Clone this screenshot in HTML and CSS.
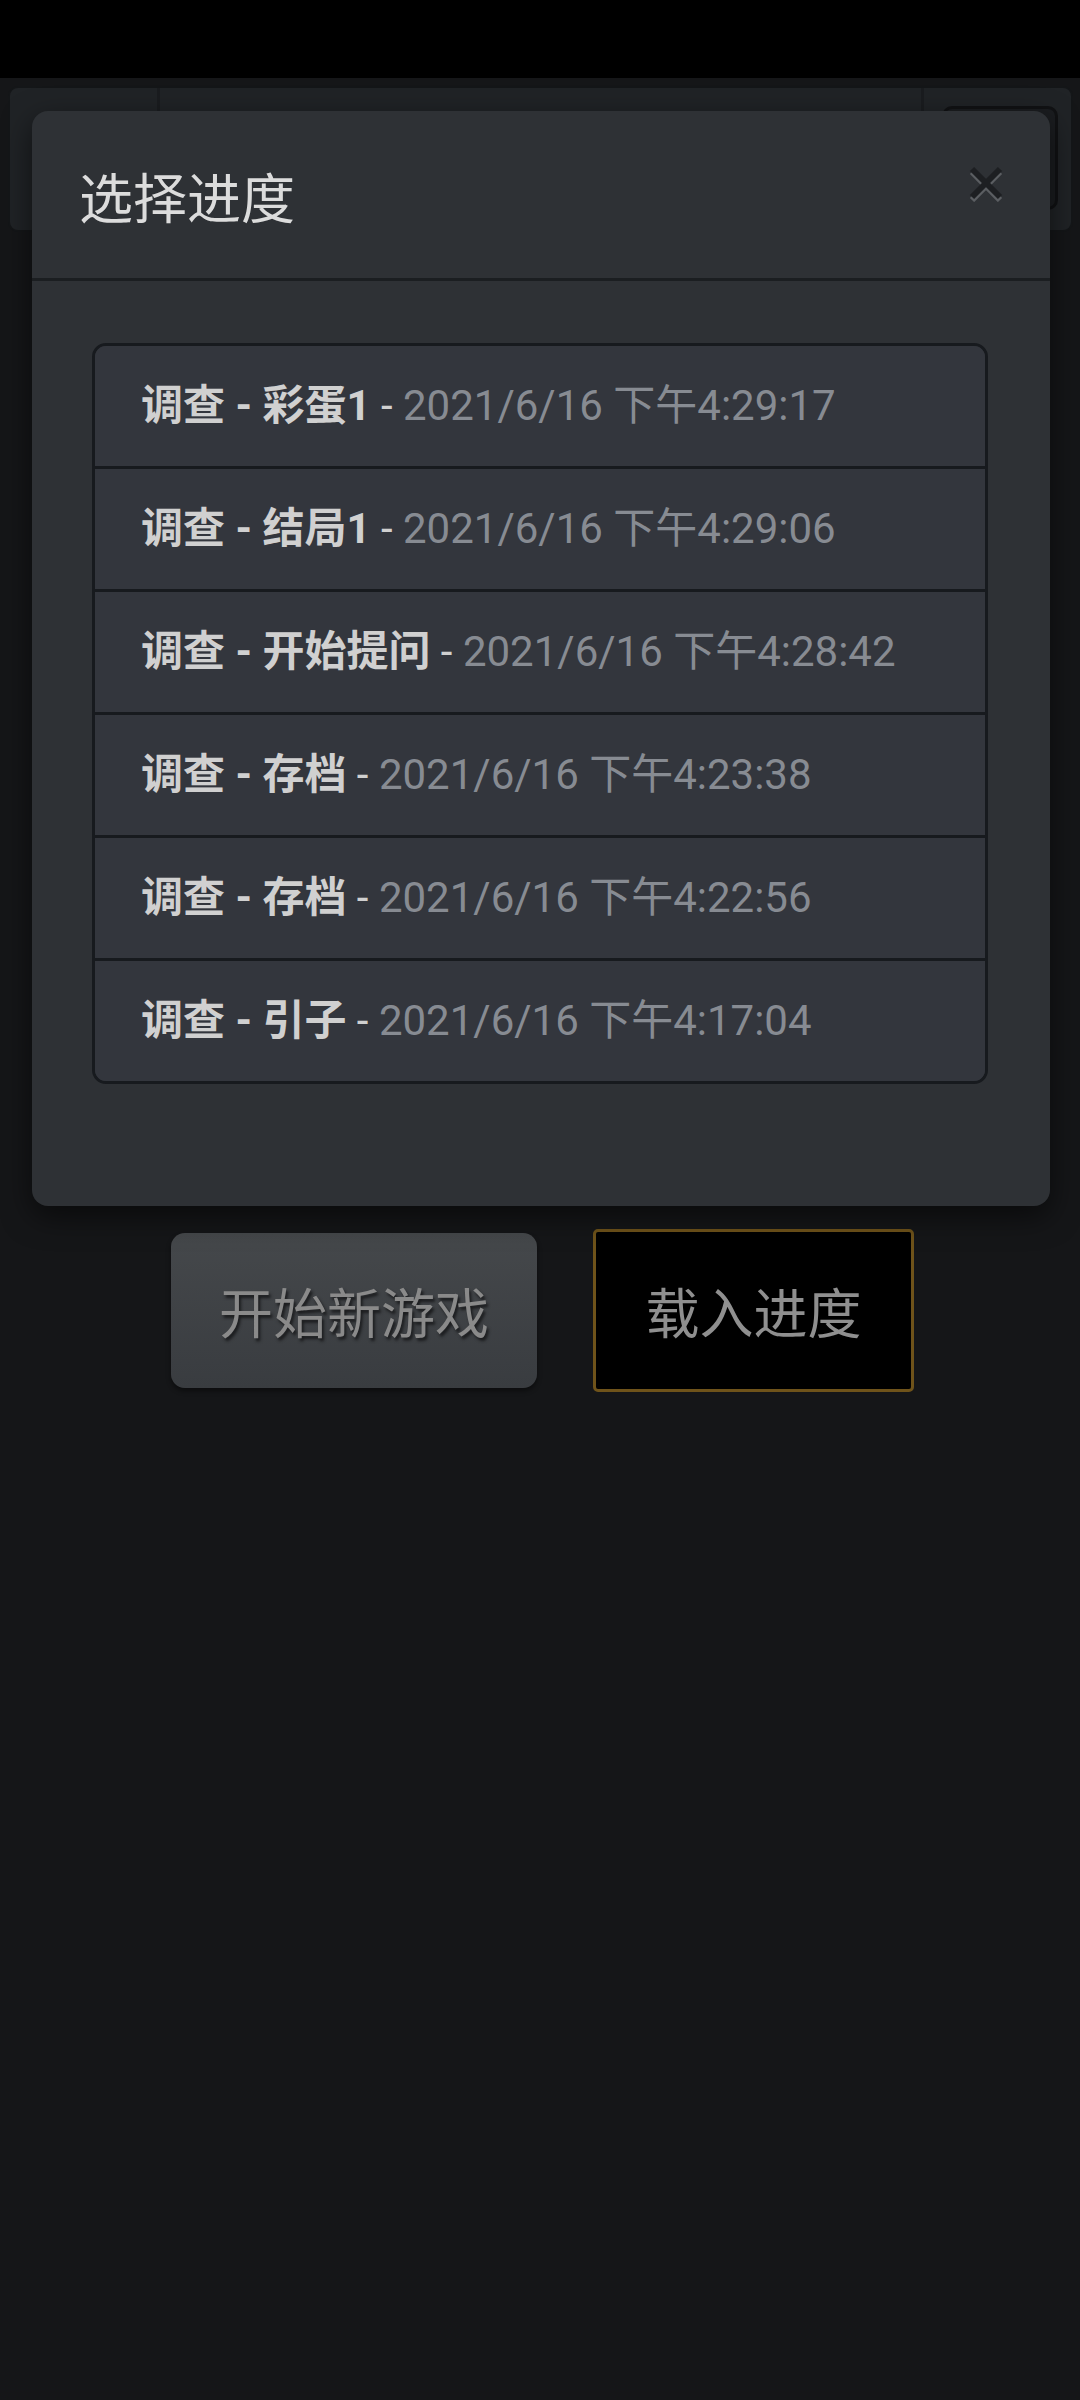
FILE: index.html
```html
<!DOCTYPE html>
<html lang="zh-CN">
<head>
  <meta charset="UTF-8">
  <meta name="viewport" content="width=device-width, initial-scale=1.0">
  <title>选择进度</title>
  <link rel="stylesheet" href="styles.css">
</head>
<body>
  <!-- Status bar -->
  <div class="status-bar"></div>

  <!-- Top bar (behind the dialog) -->
  <div class="top-bar">
    <div class="top-bar-left"></div>
    <div class="top-bar-middle"></div>
    <div class="top-bar-right">
      <div class="top-bar-button"></div>
    </div>
  </div>

  <!-- Start screen buttons -->
  <div class="start-actions">
    <button class="btn btn-new">开始新游戏</button>
    <button class="btn btn-load">载入进度</button>
  </div>

  <!-- Load dialog -->
  <div class="modal">
    <div class="modal-content">
      <div class="modal-header">
        <h5 class="modal-title">选择进度</h5>
        <button class="close" aria-label="Close">
          <svg width="34" height="36" viewBox="0 0 34 36">
            <g stroke="#5b5e62" stroke-width="6">
              <line x1="3" y1="6" x2="31" y2="34"/>
              <line x1="31" y1="6" x2="3" y2="34"/>
            </g>
            <g stroke="#1d1f22" stroke-width="6">
              <line x1="3" y1="3" x2="31" y2="31"/>
              <line x1="31" y1="3" x2="3" y2="31"/>
            </g>
          </svg>
        </button>
      </div>
      <div class="modal-body">
        <ul class="save-list">
          <li class="save-item"><b>调查 - 彩蛋1</b> - <span class="save-date">2021/6/16 下午4:29:17</span></li>
          <li class="save-item"><b>调查 - 结局1</b> - <span class="save-date">2021/6/16 下午4:29:06</span></li>
          <li class="save-item"><b>调查 - 开始提问</b> - <span class="save-date">2021/6/16 下午4:28:42</span></li>
          <li class="save-item"><b>调查 - 存档</b> - <span class="save-date">2021/6/16 下午4:23:38</span></li>
          <li class="save-item"><b>调查 - 存档</b> - <span class="save-date">2021/6/16 下午4:22:56</span></li>
          <li class="save-item"><b>调查 - 引子</b> - <span class="save-date">2021/6/16 下午4:17:04</span></li>
        </ul>
      </div>
    </div>
  </div>
</body>
</html>
```

FILE: styles.css
```css
/* General Styles */
* {
  margin: 0;
  padding: 0;
  box-sizing: border-box;
}

body {
  font-family: Roboto, "Noto Sans CJK SC", sans-serif;
  background-color: #151618;
  width: 1080px;
  height: 2400px;
  overflow: hidden;
  position: relative;
}

.status-bar {
  height: 78px;
  background: #000;
}

/* Top bar */
.top-bar {
  display: flex;
  height: 146px;
  margin: 8px 7px 0 8px;
  background: #202326;
  border: 2px solid #141618;
  border-radius: 10px;
}

.top-bar-left {
  width: 150px;
  border-right: 3px solid #1a1c1f;
}

.top-bar-middle {
  flex: 1;
}

.top-bar-right {
  width: 150px;
  border-left: 3px solid #1a1c1f;
  padding: 18px 13px 20px 18px;
}

.top-bar-button {
  height: 100%;
  background: #1b1d20;
  border: 3px solid #111214;
  border-radius: 10px;
}

/* Buttons */
.start-actions {
  display: flex;
  justify-content: center;
  align-items: center;
  gap: 56px;
  padding: 997px 0 0 5px;
}

.btn {
  font-family: "Noto Sans CJK SC", sans-serif;
  font-size: 54px;
  line-height: 1.5;
  cursor: pointer;
}

.btn-new {
  width: 366px;
  height: 155px;
  color: #8a8a8a;
  background: linear-gradient(#45484b, #393c40);
  border: none;
  border-radius: 14px;
  text-shadow: 2px 3px 3px #1b1c1e;
  box-shadow: 0 3px 5px rgba(0, 0, 0, 0.45);
}

.btn-load {
  width: 321px;
  height: 163px;
  color: #8f8f8f;
  background: #000;
  border: 3px solid #6f531a;
  border-radius: 5px;
}

/* Dialog */
.modal {
  position: absolute;
  top: 111px;
  left: 32px;
  width: 1018px;
}

.modal-content {
  background: #2e3135;
  border-radius: 16px;
  box-shadow: 0 10px 30px rgba(0, 0, 0, 0.55);
}

.modal-header {
  display: flex;
  justify-content: space-between;
  align-items: flex-start;
  padding: 45px 47px 42px 47px;
  border-bottom: 3px solid #1b1e21;
}

.modal-title {
  font-family: "Noto Sans CJK SC", sans-serif;
  font-size: 54px;
  font-weight: 400;
  line-height: 80px;
  color: #dcdcdc;
}

.close {
  background: none;
  border: none;
  margin-top: 10px;
  line-height: 0;
  cursor: pointer;
}

.modal-body {
  padding: 62px 62px 122px 60px;
}

.save-list {
  list-style: none;
  border: 3px solid #171a1e;
  border-radius: 14px;
  overflow: hidden;
}

.save-item {
  background: #33363d;
  padding: 28px 46px 29px;
  font-size: 42px;
  line-height: 63px;
  color: #d0d0d0;
  white-space: nowrap;
}

.save-item + .save-item {
  border-top: 3px solid #171a1e;
}

.save-item b {
  font-weight: 700;
}

.save-date {
  color: #878b92;
}
```
